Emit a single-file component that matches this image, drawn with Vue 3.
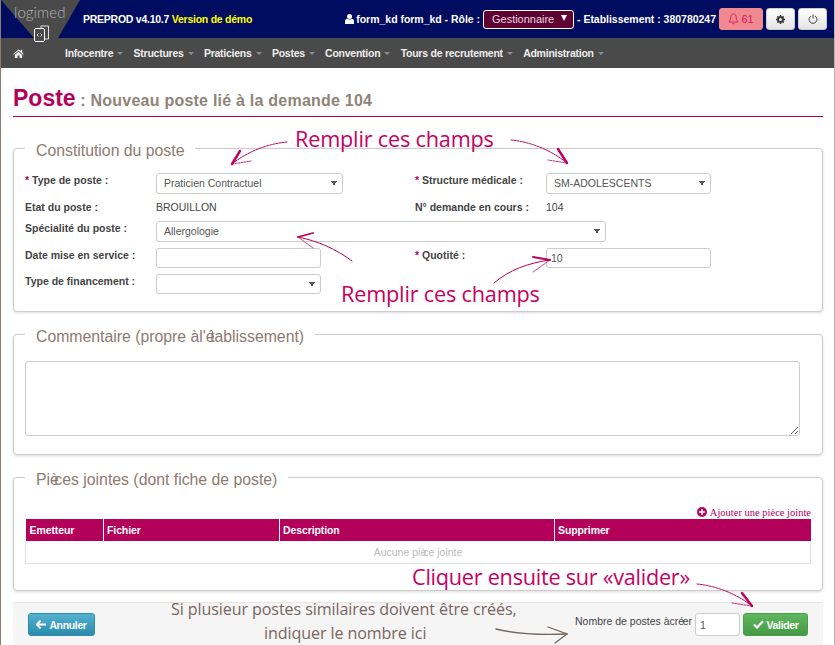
<script setup>
const menu = ['Infocentre', 'Structures', 'Praticiens', 'Postes', 'Convention', 'Tours de recrutement', 'Administration']
const columns = ['Emetteur', 'Fichier', 'Description', 'Supprimer']
</script>

<template>
  <div class="page">
    <header class="topbar">
      <div class="logo">
        <svg class="logo-shape" width="82" height="43" viewBox="0 0 82 43">
          <polygon points="1,0 80,0 58,38 34,38" fill="#4a4a4a" />
          <rect x="34.500" y="28.500" width="10" height="13" rx="1.500" fill="#4a4a4a" stroke="#fff" stroke-width="1" />
          <path d="M41 28V26h7.500v13h-3.500" fill="none" stroke="#ddd" stroke-width="1" />
          <path d="M38.500 33.500l-1.500 1.500 1.500 1.500M40.500 33.500l1.500 1.500-1.500 1.500" stroke="#fff" stroke-width=".8" fill="none" />
        </svg>
        <span class="logo-text">logimed</span>
      </div>
      <div class="env">PREPROD v4.10.7 <span class="demo">Version de démo</span></div>
      <div class="session">
        <svg class="user-icon" width="9" height="10" viewBox="0 0 9 10"><circle cx="4.500" cy="2.600" r="2.500" fill="#fff" /><path d="M0 10V7.200C0 5.800 1 5 2 4.800c1.500 1 3.500 1 5 0C8 5 9 5.800 9 7.200V10z" fill="#fff" /></svg>
        <span>form_kd form_kd - Rôle :</span>
        <div class="role">Gestionnaire<i class="role-caret"></i></div>
        <span>- Etablissement : 380780247</span>
      </div>
      <div class="buttons">
        <button class="btn-bell">
          <svg width="11" height="12" viewBox="0 0 12 13"><path d="M6 1C3.800 1 3 2.800 3 4.500 3 7.500 1.500 9 1 9.800h10C10.500 9 9 7.500 9 4.500 9 2.800 8.200 1 6 1zM4.800 11a1.300 1.300 0 0 0 2.400 0" fill="none" stroke="#d8155f" stroke-width=".9" /></svg>
          61
        </button>
        <button class="btn-light">
          <svg width="9" height="9" viewBox="0 0 12 12"><circle cx="6" cy="6" r="3.200" fill="none" stroke="#333" stroke-width="2.400" /><path d="M6 0v2.500M6 9.500V12M0 6h2.500M9.500 6H12M1.800 1.800l1.800 1.800M8.400 8.400l1.800 1.800M10.200 1.800L8.400 3.600M3.600 8.400l-1.800 1.800" stroke="#333" stroke-width="2" /></svg>
        </button>
        <button class="btn-light">
          <svg width="10" height="10" viewBox="0 0 12 12"><path d="M3.600 2.400a4.700 4.700 0 1 0 4.800 0" fill="none" stroke="#444" stroke-width="1.200" /><path d="M6 .5v5" stroke="#444" stroke-width="1.200" /></svg>
        </button>
      </div>
    </header>

    <nav class="menubar">
      <svg class="home" width="11" height="9" viewBox="0 0 13 11"><path d="M6.500 .5L0 6l.8.900L6.500 2.200l5.700 4.700.8-.9-2-1.700V1H9.500v1.400z" fill="#eee" /><path d="M2 7.200L6.500 3.400 11 7.200V11H7.800V8H5.200v3H2z" fill="#eee" /></svg>
      <div class="menu-items">
        <span v-for="item in menu" :key="item" class="menu-item">{{ item }}<i class="caret"></i></span>
      </div>
    </nav>

    <main class="content">
      <h1 class="title"><span class="title-main">Poste</span><span class="title-sub"> : Nouveau poste lié à la demande 104</span></h1>

      <section class="panel panel-form">
        <h2 class="legend legend-a">Constitution du poste</h2>
        <div class="form-grid">
          <label class="field-label"><b class="req">*</b> Type de poste :</label>
          <select class="ctl ctl-wide"><option>Praticien Contractuel</option></select>
          <label class="field-label"><b class="req">*</b> Structure médicale :</label>
          <select class="ctl"><option>SM-ADOLESCENTS</option></select>

          <label class="field-label static">Etat du poste :</label>
          <span class="value">BROUILLON</span>
          <label class="field-label static">N° demande en cours :</label>
          <span class="value">104</span>

          <label class="field-label">Spécialité du poste :</label>
          <select class="ctl ctl-span"><option>Allergologie</option></select>

          <label class="field-label">Date mise en service :</label>
          <input class="ctl" type="text" />
          <label class="field-label"><b class="req">*</b> Quotité :</label>
          <input class="ctl ctl-num" type="text" value="10" />

          <label class="field-label">Type de financement :</label>
          <select class="ctl"><option></option></select>
        </div>
      </section>

      <section class="panel panel-comment">
        <h2 class="legend legend-b">Commentaire (propre à<span class="tight-lg"> </span>l'<span class="tight-lg">é</span>tablissement)</h2>
        <textarea class="comment"></textarea>
      </section>

      <section class="panel panel-files">
        <h2 class="legend legend-c">Pi<span class="tight-lg">è</span>ces jointes (dont fiche de poste)</h2>
        <div class="add-file">
          <svg width="10" height="10" viewBox="0 0 10 10"><circle cx="5" cy="5" r="5" fill="#b30059" /><path d="M5 2v6M2 5h6" stroke="#fff" stroke-width="1.600" /></svg>
          Ajouter une pièce jointe
        </div>
        <table class="files">
          <thead><tr><th v-for="c in columns" :key="c">{{ c }}</th></tr></thead>
          <tbody><tr><td colspan="4">Aucune pi<span class="tight-sm">è</span>ce jointe</td></tr></tbody>
        </table>
      </section>

      <footer class="actions">
        <button class="btn-cancel">
          <svg width="10" height="9" viewBox="0 0 10 9"><path d="M4.500 .5L.8 4.500l3.700 4M1.200 4.500H10" fill="none" stroke="#fff" stroke-width="1.900" /></svg>
          Annuler
        </button>
        <div class="actions-right">
          <span class="count-label">Nombre de postes à<span class="tight-sm"> </span>cr<span class="tight-xs">é</span>er</span>
          <input class="count" type="text" value="1" />
          <button class="btn-ok">
            <svg width="11" height="9" viewBox="0 0 11 9"><path d="M1 4.500l3 3L10 1.200" fill="none" stroke="#fff" stroke-width="2.200" /></svg>
            Valider
          </button>
        </div>
      </footer>
    </main>

    <div class="note n1">Remplir ces champs</div>
    <div class="note n2">Remplir ces champs</div>
    <div class="note n3">Cliquer ensuite sur «valider»</div>
    <div class="note-brown n4">Si plusieur postes similaires doivent être créés,</div>
    <div class="note-brown n5">indiquer le nombre ici</div>

    <svg class="arrows" width="835" height="645" viewBox="0 0 835 645">
      <g fill="none" stroke="#b8005c" stroke-linecap="round">
        <path d="M287 142C266 144 248 152 233 163" stroke-width="1" stroke-dasharray="2 1" />
        <path d="M240 151L232 164" stroke-width="2.400" />
        <path d="M232 164L251 161" stroke-width=".8" stroke-dasharray="2 1" />
        <path d="M511 140C532 142 552 151 567 163" stroke-width="1" stroke-dasharray="2 1" />
        <path d="M558 149L567 163" stroke-width="2.400" />
        <path d="M567 163L548 160" stroke-width=".8" stroke-dasharray="2 1" />
        <path d="M352 261C336 249 318 241 298 237" stroke-width="1" />
        <path d="M298 237L313 233" stroke-width="1.800" />
        <path d="M298 237L313 248" stroke-width=".7" />
        <path d="M494 283C509 270 528 263 550 260" stroke-width="1" />
        <path d="M533 257L550 260" stroke-width="1.800" />
        <path d="M550 260L533 272" stroke-width=".7" />
        <path d="M697 584C718 586 738 595 752 606" stroke-width="1" stroke-dasharray="2 1" />
        <path d="M742 593L752 606" stroke-width="2.400" />
        <path d="M752 606L732 603" stroke-width=".8" stroke-dasharray="2 1" />
      </g>
      <g fill="none" stroke="#7a665e" stroke-linecap="round">
        <path d="M496 629C515 634 540 635 567 634" stroke-width="1.400" />
        <path d="M548 627L567 634L555 643" stroke-width="1.300" />
      </g>
    </svg>
  </div>
</template>

<style>
html, body { margin: 0; height: 645px; overflow: hidden; background: #fff; }
</style>

<style scoped>
.page {
  position: relative;
  width: 835px;
  height: 645px;
  box-sizing: border-box;
  border-left: 1px solid #8c7b70;
  border-right: 1px solid #b5b5b5;
  overflow: hidden;
  font-family: "Liberation Sans", Arial, sans-serif;
  color: #333;
  background: #fff;
}
.topbar {
  display: flex;
  align-items: center;
  height: 38px;
  background: #000c5f;
  color: #fff;
  font-size: 10.5px;
  font-weight: 700;
}
.logo { position: absolute; left: -1px; top: 0; width: 82px; height: 43px; z-index: 2; }
.logo-shape { display: block; }
.logo-text {
  position: absolute;
  left: 14px;
  top: 3px;
  font-family: "Lato", sans-serif;
  font-weight: 300;
  font-size: 15px;
  letter-spacing: .1px;
  color: #b4b4b4;
}
.env { margin-left: 82px; white-space: nowrap; letter-spacing: -.25px; }
.demo { color: #ff0; }
.session { display: flex; align-items: center; margin-left: auto; white-space: nowrap; letter-spacing: -.02px; }
.user-icon { margin-right: 2px; }
.role {
  position: relative;
  box-sizing: border-box;
  width: 91px;
  height: 19px;
  margin: 0 3px;
  padding-left: 8px;
  line-height: 17px;
  font-weight: 400;
  font-size: 11px;
  color: #e8d8e0;
  background: #5f0033;
  border: 1px solid #fff;
  border-radius: 3px;
}
.role-caret {
  position: absolute;
  right: 6px;
  top: 4px;
  border: 3.500px solid transparent;
  border-top: 6px solid #fff;
  border-bottom: 0;
}
.buttons { display: flex; gap: 3px; margin: 0 7px 0 3px; }
.buttons button {
  display: flex;
  align-items: center;
  justify-content: center;
  box-sizing: border-box;
  height: 22px;
  padding: 0;
  border-radius: 3px;
  font-family: inherit;
  font-size: 11px;
}
.btn-bell { gap: 2px; width: 44px; color: #d8155f; background: #f08a90; border: 1px solid #ee8a90; }
.btn-light { width: 29px; background: linear-gradient(#fff, #e4e4e4); border: 1px solid #ccc; }
.menubar {
  display: flex;
  align-items: center;
  height: 30px;
  padding-left: 12px;
  background: #4a4a4a;
}
.home { margin-right: 41px; }
.menu-items { display: flex; gap: 10.300px; }
.menu-item {
  display: flex;
  align-items: center;
  gap: 3px;
  color: #eee;
  font-size: 10.5px;
  font-weight: 700;
  letter-spacing: -.25px;
  white-space: nowrap;
}
.caret {
  display: inline-block;
  margin-left: 1px;
  border: 3px solid transparent;
  border-top: 3px solid #8e8e8e;
  border-bottom: 0;
}
.content { padding: 0 11px 0 12px; }
.title {
  height: 48px;
  margin: 0 0 31px;
  box-sizing: content-box;
  border-bottom: 1px solid #b30059;
  font-size: 16px;
  line-height: 61px;
  white-space: nowrap;
}
.title-main { font-size: 23px; color: #b30059; }
.title-sub { color: #918378; letter-spacing: .23px; }
.panel {
  position: relative;
  box-sizing: border-box;
  border: 1px solid #ccc;
  border-radius: 4px;
  background: #fff;
  box-shadow: 0 1px 3px rgba(0, 0, 0, .14);
}
.panel-form { height: 164px; padding: 24px 11px 0; }
.panel-comment { height: 121px; margin-top: 22px; padding: 26px 11px 0; }
.panel-files { height: 114px; margin-top: 22px; padding: 27px 11px 0; }
.legend {
  position: absolute;
  left: 11px;
  margin: 0;
  padding: 0 11px;
  top: -8px;
  height: 20px;
  line-height: 20px;
  background: #fff;
  color: #8c7b70;
  font-size: 15.800px;
  font-weight: 400;
  white-space: nowrap;
}
.tight-lg { letter-spacing: -4.500px; }
.tight-sm { letter-spacing: -3px; }
.tight-xs { letter-spacing: -1.500px; }
.form-grid {
  display: grid;
  grid-template-columns: 131px 259px 131px 165px;
  grid-template-rows: 21px 15px 21px 20px 20px;
  row-gap: 6px;
  align-items: start;
  font-size: 10.5px;
}
.field-label { font-weight: 700; color: #444; line-height: 14px; white-space: nowrap; }
.field-label.static { line-height: 15px; }
.req { color: #b30059; }
.value { color: #444; line-height: 15px; }
.ctl {
  box-sizing: border-box;
  width: 165px;
  height: 100%;
  margin: 0;
  padding: 0 3px;
  border: 1px solid #ccc;
  border-radius: 3px;
  background-color: #fff;
  color: #555;
  font-family: inherit;
  font-size: 10.5px;
}
select.ctl {
  appearance: none;
  padding: 0 7px 2px;
  background-image: conic-gradient(from -30deg at 50% 100%, #555 60deg, transparent 0);
  background-repeat: no-repeat;
  background-size: 6px 5px;
  background-position: right 5px center;
}
.ctl-wide { width: 187px; }
.ctl-span { width: 450px; grid-column: 2 / 5; }
.ctl-num { padding-left: 4px; }
.comment {
  display: block;
  box-sizing: border-box;
  width: 775px;
  height: 75px;
  border: 1px solid #ccc;
  border-radius: 3px;
  background: #fff;
  margin: 0;
}
.add-file {
  display: flex;
  justify-content: flex-end;
  align-items: center;
  gap: 3px;
  height: 14px;
  font-family: "Liberation Serif", serif;
  font-size: 10.500px;
  color: #b30059;
}
.files {
  width: 786px;
  border-collapse: collapse;
  table-layout: fixed;
  font-size: 10.5px;
}
.files th {
  height: 22px;
  padding: 0 3px;
  box-sizing: border-box;
  text-align: left;
  color: #fff;
  background: #b30059;
  border-left: 1px solid #fff;
  letter-spacing: -.1px;
}
.files th:nth-child(1) { width: 78px; border-left: 0; padding-left: 4px; }
.files th:nth-child(2) { width: 176px; }
.files th:nth-child(3) { width: 275px; }
.files td {
  height: 22px;
  padding: 0;
  text-align: center;
  color: #bbb;
  border: 1px solid #e0e0e0;
  border-top: 0;
}
.actions {
  display: flex;
  align-items: center;
  justify-content: space-between;
  box-sizing: border-box;
  height: 44px;
  margin-top: 11px;
  padding: 0 15px;
  background: #f5f5f5;
  border-top: 1px solid #e6e6e6;
}
.btn-cancel, .btn-ok {
  display: flex;
  align-items: center;
  justify-content: center;
  gap: 3px;
  box-sizing: border-box;
  height: 23px;
  padding: 0;
  border-radius: 3px;
  color: #fff;
  font-family: inherit;
  font-size: 10.5px;
  font-weight: 700;
  letter-spacing: -.35px;
}
.btn-cancel { width: 67px; background: linear-gradient(#54b1d2, #2a8bad); border: 1px solid #2f8cab; }
.btn-ok { width: 65px; background: linear-gradient(#5fb75f, #459a45); border: 1px solid #4a9e4a; }
.actions-right { display: flex; align-items: center; gap: 3px; }
.count-label { margin-bottom: 8px; font-size: 10.5px; color: #444; white-space: nowrap; }
.count {
  box-sizing: border-box;
  width: 45px;
  height: 23px;
  margin: 0;
  padding: 0 4px;
  border: 1px solid #ccc;
  border-radius: 3px;
  color: #555;
  font-family: inherit;
  font-size: 10.5px;
}
.note, .note-brown {
  position: absolute;
  font-family: "Open Sans", sans-serif;
  white-space: nowrap;
  z-index: 3;
}
.note { color: #c8005f; font-size: 21.700px; line-height: 26px; letter-spacing: -.2px; }
.note-brown { color: #7a665e; font-size: 16.100px; line-height: 20px; letter-spacing: -.1px; }
.n1 { left: 294px; top: 126px; }
.n2 { left: 340px; top: 281px; }
.n3 { left: 411px; top: 564px; letter-spacing: -.27px; }
.n4 { left: 170px; top: 599px; }
.n5 { left: 263px; top: 623px; }
.arrows { position: absolute; left: -1px; top: 0; z-index: 4; pointer-events: none; }
</style>
